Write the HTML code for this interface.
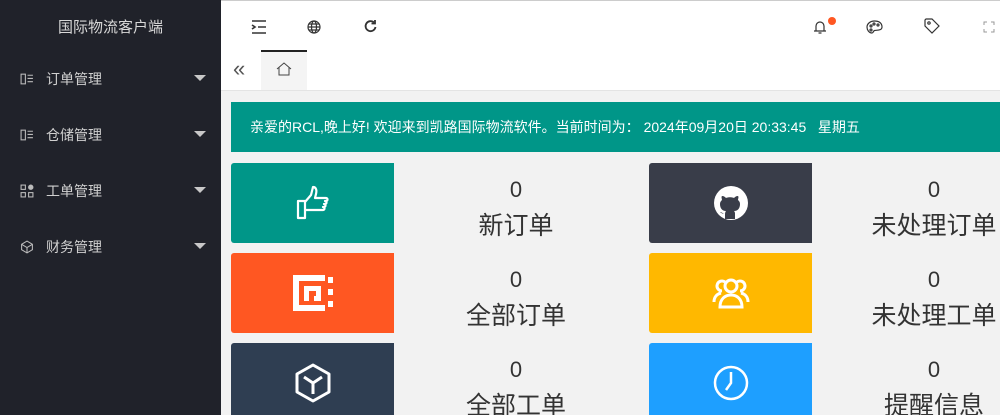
<!DOCTYPE html>
<html><head><meta charset="utf-8"><style>
*{margin:0;padding:0;box-sizing:border-box}
html,body{width:1000px;height:415px;overflow:hidden}
body{font-family:"Liberation Sans","Noto Sans CJK SC",sans-serif;background:#f2f2f2;position:relative}
.side{position:absolute;left:0;top:0;width:221px;height:415px;background:#20222a}
.title{position:absolute;left:0;width:221px;top:16px;text-align:center;color:#d8d8d8;font-size:15px}
.mi{position:absolute;left:0;width:221px;height:20px;color:#d0d0d0;font-size:14px}
.mi span{position:absolute;left:46px;top:0}
.mi svg{position:absolute;left:20px;top:3px}
.mi i{position:absolute;left:194px;top:6px;border-left:6px solid transparent;border-right:6px solid transparent;border-top:6px solid #c8c8c8}
.hdr{position:absolute;left:221px;top:0;right:0;height:50px;background:#fff;border-top:1px solid #ccc}
.tabs{position:absolute;left:221px;top:50px;right:0;height:41px;background:#fff;border-bottom:1px solid #e4e4e4}
.banner{position:absolute;left:231px;top:102px;width:769px;height:50px;background:#009688;color:#fff;font-size:14px;line-height:50px;padding-left:19px;white-space:nowrap}
.blk{position:absolute;width:163px;height:80px;border-radius:3px 0 0 3px;display:flex;align-items:center;justify-content:center}
.inf{position:absolute;width:244px;text-align:center;color:#333}
.inf b{display:block;font-weight:normal;font-size:22px;height:36px;line-height:36px}
.inf p{font-size:25px;line-height:36px}
</style></head><body>
<div class="side">
<div class="title">国际物流客户端</div>
<div class="mi" style="top:69px"><svg width="14" height="14" viewBox="0 0 13 13" fill="none" stroke="#bbb"><rect x="1" y="2" width="4" height="9"/><path d="M7 3h5M7 6h5M7 9h5"/></svg><span>订单管理</span><i></i></div>
<div class="mi" style="top:125px"><svg width="14" height="14" viewBox="0 0 13 13" fill="none" stroke="#bbb"><rect x="1" y="2" width="4" height="9"/><path d="M7 3h5M7 6h5M7 9h5"/></svg><span>仓储管理</span><i></i></div>
<div class="mi" style="top:181px"><svg width="14" height="14" viewBox="0 0 13 13" fill="none" stroke="#bbb"><rect x="1" y="1" width="4" height="4"/><rect x="1" y="8" width="4" height="4"/><rect x="8" y="8" width="4" height="4"/><circle cx="10" cy="3" r="2" fill="#bbb"/></svg><span>工单管理</span><i></i></div>
<div class="mi" style="top:237px"><svg width="14" height="14" viewBox="0 0 13 13" fill="none" stroke="#bbb"><path d="M6.5 1l5 3v5l-5 3-5-3V4zM1.5 4l5 3 5-3M6.5 7v5"/></svg><span>财务管理</span><i></i></div>
</div>
<div class="hdr">
<svg style="position:absolute;left:30px;top:19px" width="16" height="14" viewBox="0 0 16 14" stroke="#333" stroke-width="1.6" fill="none"><path d="M1 1h14M7 7h8M1 13h14M1 5l3 2-3 2"/></svg>
<svg style="position:absolute;left:86px;top:19px" width="14" height="14" viewBox="0 0 14 14" stroke="#333" stroke-width="1.2" fill="none"><circle cx="7" cy="7" r="6"/><ellipse cx="7" cy="7" rx="2.5" ry="6"/><path d="M1 7h12M2 4h10M2 10h10"/></svg>
<svg style="position:absolute;left:142px;top:18px" width="15" height="15" viewBox="0 0 15 15" stroke="#333" stroke-width="1.8" fill="none"><path d="M12.5 8a5 5 0 1 1-1.5-4.5"/><path d="M12 1v3.5H8.5" fill="none"/></svg>
<svg style="position:absolute;left:592px;top:18px" width="14" height="16" viewBox="0 0 14 16" stroke="#333" stroke-width="1.2" fill="none"><path d="M3 12V7a4 4 0 0 1 8 0v5M1 12h12M5.5 14h3"/></svg>
<div style="position:absolute;left:607px;top:16px;width:8px;height:8px;border-radius:50%;background:#ff5722"></div>
<svg style="position:absolute;left:645px;top:19px" width="17" height="14" viewBox="0 0 17 14" stroke="#333" stroke-width="1.2" fill="none"><path d="M8.5 1C4 1 1 4 1 7s2 6 5 6c1.5 0 1-2 2.5-2.5S16 11 16 7 13 1 8.5 1z"/><circle cx="5" cy="6" r="1"/><circle cx="8" cy="4" r="1"/><circle cx="12" cy="5" r="1"/><circle cx="5" cy="10" r="1"/></svg>
<svg style="position:absolute;left:703px;top:17px" width="16" height="16" viewBox="0 0 16 16" stroke="#333" stroke-width="1.2" fill="none"><path d="M1 2v6l7 7 7-7-7-7H2z"/><circle cx="5" cy="5" r="1.2"/></svg>
<svg style="position:absolute;left:762px;top:20px" width="12" height="12" viewBox="0 0 12 12" stroke="#999" stroke-width="1" fill="none"><path d="M1 4V1h3M8 1h3v3M11 8v3H8M4 11H1V8"/></svg>
</div>
<div class="tabs">
<div style="position:absolute;left:12px;top:6px;font-size:22px;color:#555">«</div>
<div style="position:absolute;left:40px;top:0;width:46px;height:40px;background:#f4f4f4;border-top:2px solid #222"></div>
<svg style="position:absolute;left:55px;top:12px" width="16" height="14" viewBox="0 0 16 14" stroke="#444" stroke-width="1" fill="none"><path d="M1 7L8 1l7 6M3 5.5V13h10V5.5"/></svg>
</div>
<div class="banner">亲爱的RCL,晚上好! 欢迎来到凯路国际物流软件。当前时间为： 2024年09月20日 20:33:45 &nbsp;&nbsp;星期五</div>

<div class="blk" style="left:231px;top:163px;background:#009688"><svg width="38" height="38" viewBox="0 0 38 38" fill="none" stroke="#fff" stroke-width="2.2" stroke-linejoin="round"><path d="M4 17h7v17H4zM11 18l6-7 2-8c3 0 4 3 3 7l-1 4h11c2 0 2 3 0 3h-1c2 0 2 3 0 3h-1c2 0 2 3 0 3h-1c2 0 2 3 0 3H11"/></svg></div>
<div class="inf" style="left:394px;top:172px"><b>0</b><p>新订单</p></div>
<div class="blk" style="left:231px;top:253px;background:#ff5722"><svg width="40" height="36" viewBox="0 0 40 36" fill="#fff"><path d="M0 0h32v6H6v24h26v6H0z M11 11h17v15H21v-5h2v-5h-7v10h-5z"/><rect x="35" y="2" width="5" height="6"/><rect x="35" y="14" width="5" height="6"/><rect x="35" y="26" width="5" height="6"/></svg></div>
<div class="inf" style="left:394px;top:262px"><b>0</b><p>全部订单</p></div>
<div class="blk" style="left:231px;top:343px;background:#2f3e52"><svg width="38" height="40" viewBox="0 0 38 40" fill="none" stroke="#fff" stroke-width="3" stroke-linejoin="round"><path d="M19 2l16 9v18l-16 9-16-9V11zM10 14l9 6 9-6M19 20v11"/></svg></div>
<div class="inf" style="left:394px;top:352px"><b>0</b><p>全部工单</p></div>

<div class="blk" style="left:649px;top:163px;background:#393d49"><svg width="36" height="36" viewBox="0 0 36 36"><circle cx="18" cy="18" r="17" fill="#fff"/><path d="M12 34v-5c-3 0-5-2-5-2 2 0 3 2 5 2 0-2 1-3 1-3-4 0-6-3-6-7 0-2 1-3 2-4 0-1-1-3 0-4 2 0 3 1 4 2 2-1 6-1 8 0 1-1 2-2 4-2 1 1 0 3 0 4 1 1 2 2 2 4 0 4-2 7-6 7 1 1 1 2 1 3v5z" fill="#393d49"/></svg></div>
<div class="inf" style="left:812px;top:172px"><b>0</b><p>未处理订单</p></div>
<div class="blk" style="left:649px;top:253px;background:#ffb800"><svg width="42" height="34" viewBox="0 0 42 34" fill="none" stroke="#fff" stroke-width="3"><circle cx="21" cy="10" r="6"/><path d="M10 31c0-8 5-12 11-12s11 4 11 12z"/><path d="M12 15a5 5 0 1 1 3-9M4 26c0-5 3-8 7-9M30 15a5 5 0 1 0-3-9M38 26c0-5-3-8-7-9"/></svg></div>
<div class="inf" style="left:812px;top:262px"><b>0</b><p>未处理工单</p></div>
<div class="blk" style="left:649px;top:343px;background:#1e9fff"><svg width="38" height="38" viewBox="0 0 38 38" fill="none" stroke="#fff" stroke-width="2.5"><circle cx="19" cy="19" r="16"/><path d="M19 8v11l-5 7"/></svg></div>
<div class="inf" style="left:812px;top:352px"><b>0</b><p>提醒信息</p></div>
</body></html>
